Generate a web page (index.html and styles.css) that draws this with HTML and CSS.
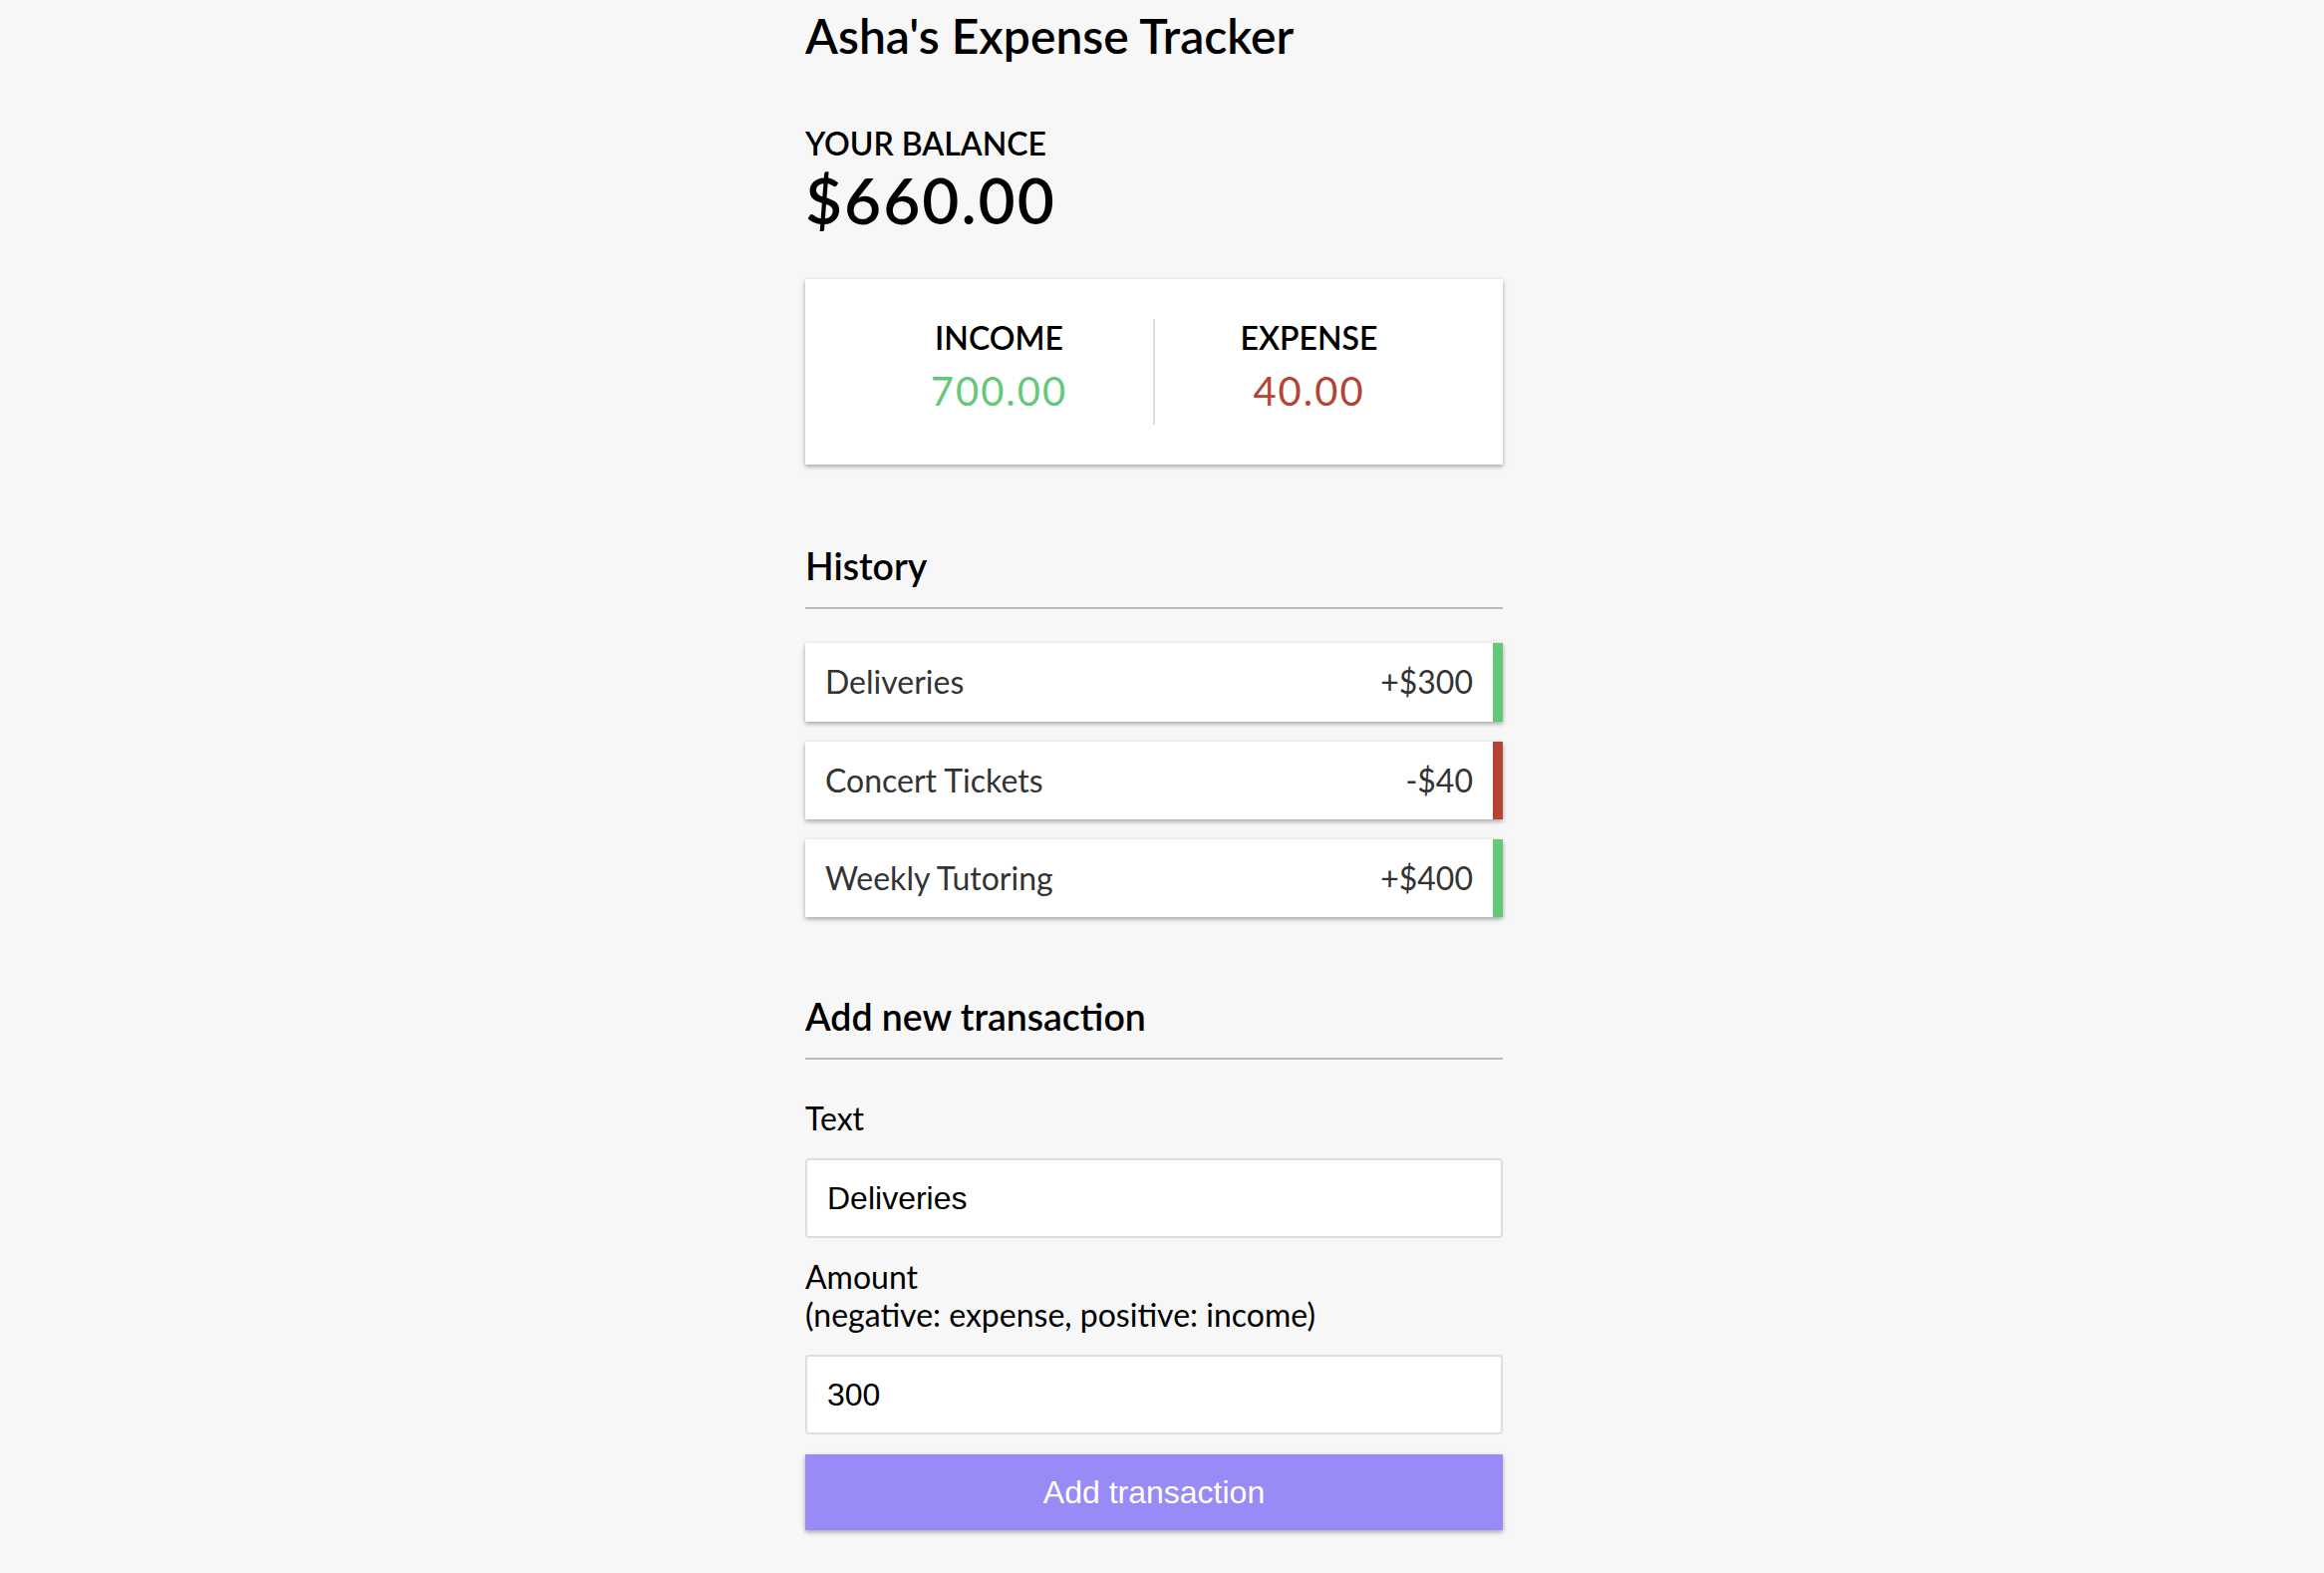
FILE: index.html
```html
<!DOCTYPE html>
<html lang="en">
<head>
<meta charset="UTF-8">
<title>Expense Tracker</title>
<link rel="stylesheet" href="styles.css">
</head>
<body>
<div class="container">
  <h2 class="title">Asha's Expense Tracker</h2>
  <h4 class="balance-label">Your Balance</h4>
  <h1 class="balance">$660.00</h1>

  <div class="summary">
    <div class="summary-col">
      <h4 class="summary-label">Income</h4>
      <p class="money plus">700.00</p>
    </div>
    <div class="summary-col">
      <h4 class="summary-label">Expense</h4>
      <p class="money minus">40.00</p>
    </div>
  </div>

  <h3 class="section-title">History</h3>
  <ul class="list">
    <li class="item plus">Deliveries <span>+$300</span></li>
    <li class="item minus">Concert Tickets <span>-$40</span></li>
    <li class="item plus">Weekly Tutoring <span>+$400</span></li>
  </ul>

  <h3 class="section-title section-title--form">Add new transaction</h3>
  <form class="form">
    <div class="field">
      <label for="text">Text</label>
      <input type="text" id="text" class="input" value="Deliveries">
    </div>
    <div class="field">
      <label for="amount">Amount<br>(negative: expense, positive: income)</label>
      <input type="number" id="amount" class="input" value="300">
    </div>
    <button type="button" class="btn">Add transaction</button>
  </form>
</div>
</body>
</html>
```
FILE: styles.css
```css
* {
  box-sizing: border-box;
}

html,
body {
  margin: 0;
}

body {
  background-color: #f7f7f7;
  font-family: "Lato", "Noto Sans", sans-serif;
  color: #000;
  display: flex;
  flex-direction: column;
  align-items: center;
  padding-right: 16px;
  min-height: 100vh;
  overflow: hidden;
}

.container {
  width: 700px;
  padding-top: 7px;
}

.title {
  font-size: 48px;
  font-weight: 600;
  line-height: 1.2;
  margin: 0 0 60px;
}

.balance-label {
  font-size: 32px;
  font-weight: 600;
  line-height: 1.2;
  text-transform: uppercase;
  margin: 0;
}

.balance {
  font-size: 64px;
  font-weight: 600;
  line-height: 1.2;
  letter-spacing: 2px;
  margin: 0;
}

.summary {
  background-color: #fff;
  box-shadow: 0 2px 6px rgba(0, 0, 0, 0.12), 0 2px 4px rgba(0, 0, 0, 0.24);
  padding: 40px;
  display: flex;
  justify-content: space-between;
  margin: 40px 0;
}

.summary-col {
  flex: 1;
  text-align: center;
}

.summary-col:first-child {
  border-right: 2px solid #dedede;
}

.summary-label {
  font-size: 32px;
  font-weight: 600;
  line-height: 1.2;
  text-transform: uppercase;
  margin: 0;
}

.money {
  font-size: 40px;
  line-height: 1.2;
  letter-spacing: 2px;
  margin: 10px 0;
}

.money.plus {
  color: #65c879;
}

.money.minus {
  color: #b34436;
}

.section-title {
  font-size: 37.44px;
  font-weight: 600;
  line-height: 43px;
  border-bottom: 2px solid #bbb;
  padding-bottom: 20px;
  margin: 80px 0 20px;
}

.section-title--form {
  margin-top: 78px;
}

.list {
  list-style-type: none;
  padding: 0;
  margin: 34px 0 0;
}

.item {
  background-color: #fff;
  box-shadow: 0 2px 6px rgba(0, 0, 0, 0.12), 0 2px 4px rgba(0, 0, 0, 0.24);
  color: #333;
  display: flex;
  justify-content: space-between;
  font-size: 32px;
  line-height: 1.2;
  padding: 20px;
  margin: 20px 0;
}

.item.plus {
  border-right: 10px solid #65c879;
}

.item.minus {
  border-right: 10px solid #b34436;
}

.form {
  margin: 0;
}

.field {
  font-size: 32px;
  line-height: 1.2;
}

.field label {
  display: inline-block;
  margin: 20px 0;
}

.input {
  display: block;
  width: 100%;
  border: 2px solid #dedede;
  border-radius: 4px;
  background: #fff;
  color: #000;
  font-family: "Liberation Sans", Arial, sans-serif;
  font-size: 32px;
  line-height: 36px;
  padding: 20px;
  margin: 0;
  -moz-appearance: textfield;
}

.input::-webkit-outer-spin-button,
.input::-webkit-inner-spin-button {
  -webkit-appearance: none;
  margin: 0;
}

.btn {
  cursor: pointer;
  background-color: #988bf5;
  box-shadow: 0 2px 6px rgba(0, 0, 0, 0.12), 0 2px 4px rgba(0, 0, 0, 0.24);
  color: #fff;
  border: 0;
  display: block;
  font-family: "Liberation Sans", Arial, sans-serif;
  font-size: 32px;
  line-height: 36px;
  margin: 20px 0 30px;
  padding: 20px;
  width: 100%;
}
```
